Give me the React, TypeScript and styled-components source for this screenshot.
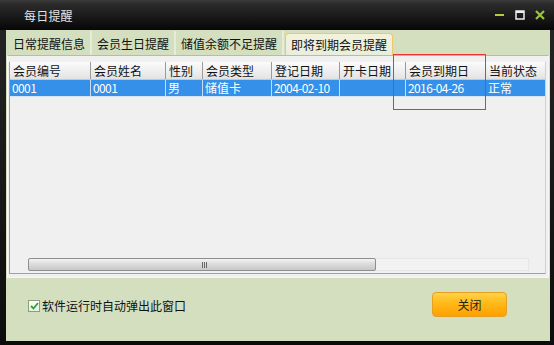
import React from "react"
import styled, { createGlobalStyle } from "styled-components"

const GlobalStyle = createGlobalStyle`
  html, body {
    margin: 0;
    padding: 0;
    background: #111;
  }
  body {
    font-family: "Noto Sans CJK SC", "Noto Sans", sans-serif;
    font-size: 12px;
  }
`

const Window = styled.div`
  width: 554px;
  height: 345px;
  display: flex;
  flex-direction: column;
  background: linear-gradient(#262626, #0c0c0c);
  box-sizing: border-box;
  overflow: hidden;
`

const TitleBar = styled.div`
  height: 30px;
  flex: none;
  display: flex;
  align-items: center;
  padding: 0 8px 0 24px;
  background: linear-gradient(#3c3c3c 0%, #2c2c2c 12%, #1a1a1a 55%, #060606 100%);
  color: #e4e4e4;
  font-size: 12px;
`

const Title = styled.div`
  flex: 1;
  letter-spacing: 0.2px;
`

const Controls = styled.div`
  display: flex;
  align-items: center;
  gap: 10px;
  margin-right: 1px;
`

const Body = styled.div`
  flex: 1;
  margin: 0 4px 4px 6px;
  background: #d3dfbf;
  display: flex;
  flex-direction: column;
`

const TabBar = styled.div`
  height: 25px;
  display: flex;
  align-items: flex-end;
  padding-left: 2px;
  flex: none;
`

const Tab = styled.div<{ $active?: boolean }>`
  height: ${(p) => (p.$active ? "22px" : "24px")};
  display: flex;
  align-items: center;
  padding: 0 5px;
  color: #111;
  font-size: 12px;
  box-sizing: border-box;
  ${(p) =>
    p.$active
      ? `
    background: linear-gradient(#f7f1d6, #eef1df 30%, #e9eedb);
    border: 1px solid #f0c66c;
    border-bottom: none;
    border-radius: 4px 4px 0 0;
    margin-left: 1px;
  `
      : `
    border-right: 2px solid #e6ecd8;
  `}
`

const Panel = styled.div`
  height: 223px;
  margin: 0 1px;
  border: 1px solid #f6f6f6;
  border-top-color: #b8b8b8;
  border-left-color: #fbfbfb;
  background: #f0f0f0;
  box-sizing: border-box;
  padding: 6px 2px 3px 1px;
  flex: none;
  display: flex;
  position: relative;
`

const Grid = styled.div`
  flex: 1;
  border: 1px solid #a0a0a0;
  border-top: none;
  border-right-color: #d0d0d0;
  display: flex;
  flex-direction: column;
  background: #f0f0f0;
`

const HeaderRow = styled.div`
  display: flex;
  height: 17px;
  background: linear-gradient(#fbfbfb, #ededed 60%, #e2e2e2);
  border-bottom: 1px solid #c8c8c8;
`

const HeadCell = styled.div<{ $w: number }>`
  width: ${(p) => p.$w}px;
  flex: none;
  box-sizing: border-box;
  padding-left: 3px;
  border-left: 1px solid #9a9a9a;
  line-height: 17px;
  color: #111;
  font-size: 12px;
  white-space: nowrap;
  overflow: hidden;
  &:first-child {
    border-left: none;
  }
`

const DataRow = styled.div<{ $selected?: boolean }>`
  display: flex;
  height: 16px;
  background: ${(p) => (p.$selected ? "#3590ea" : "transparent")};
  color: ${(p) => (p.$selected ? "#fff" : "#000")};
  border-bottom: 1px solid #d8e6f4;
`

const Cell = styled.div<{ $w: number; $mono?: boolean }>`
  width: ${(p) => p.$w}px;
  flex: none;
  box-sizing: border-box;
  padding-left: 2px;
  border-left: 1px solid #c6dcf4;
  line-height: 16px;
  font-size: 12px;
  white-space: nowrap;
  overflow: hidden;
  letter-spacing: ${(p) => (p.$mono ? "-0.6px" : "0")};
  &:first-child {
    border-left: none;
  }
`

const Spacer = styled.div`
  flex: 1;
`

const ScrollRow = styled.div`
  height: 14px;
  display: flex;
  padding-left: 18px;
  margin-bottom: 1px;
`

const Track = styled.div`
  width: 501px;
  height: 13px;
  display: flex;
  border: 1px solid #e6e6e6;
  background: #f2f2f2;
  box-sizing: border-box;
`

const Thumb = styled.div`
  width: 348px;
  height: 13px;
  margin: -1px 0 0 -1px;
  box-sizing: border-box;
  border: 1px solid #8e8e8e;
  border-radius: 2px;
  background: linear-gradient(#f4f4f4, #dcdcdc 45%, #c8c8cc);
  display: flex;
  align-items: center;
  justify-content: center;
`

const Grip = styled.div`
  width: 6px;
  height: 6px;
  margin-left: 6px;
  background: repeating-linear-gradient(90deg, #6a6a6a 0 1px, transparent 1px 2px);
`

const Highlight = styled.div`
  position: absolute;
  left: 385px;
  top: -2px;
  width: 93px;
  height: 56px;
  border: 1px solid #f03232;
  box-sizing: border-box;
  pointer-events: none;
`

const Footer = styled.div`
  flex: 1;
  display: flex;
  align-items: flex-start;
  padding: 14px 43px 0 22px;
`

const CheckLabel = styled.label`
  display: flex;
  align-items: center;
  gap: 2px;
  margin-top: 5px;
  color: #111;
  font-size: 12px;
  flex: 1;
`

const Box = styled.span`
  width: 12px;
  height: 12px;
  box-sizing: border-box;
  border: 1px solid #8aa07a;
  background: linear-gradient(#ffffff, #e6f0dc);
  display: flex;
  align-items: center;
  justify-content: center;
`

const CloseButton = styled.button`
  width: 75px;
  height: 25px;
  border: 1px solid #e8a020;
  border-radius: 4px;
  background: linear-gradient(#ffd24a 0%, #ffbb1c 40%, #ffa000 100%);
  color: #222;
  font-family: "Noto Sans CJK SC", sans-serif;
  font-size: 12px;
  padding: 0;
  cursor: pointer;
`

const columns = [
  { title: "会员编号", w: 80 },
  { title: "会员姓名", w: 75 },
  { title: "性别", w: 37 },
  { title: "会员类型", w: 69 },
  { title: "登记日期", w: 68 },
  { title: "开卡日期", w: 66 },
  { title: "会员到期日", w: 80 },
  { title: "当前状态", w: 60 },
]

const row = ["0001", "0001", "男", "储值卡", "2004-02-10", "", "2016-04-26", "正常"]
const monoCols = [0, 1, 4, 6]

export default function App() {
  return (
    <Window>
      <GlobalStyle />
      <TitleBar>
        <Title>每日提醒</Title>
        <Controls>
          <svg width="10" height="10" viewBox="0 0 10 10">
            <rect x="0" y="4" width="9" height="2" fill="#b4cc3c" />
          </svg>
          <svg width="10" height="10" viewBox="0 0 10 10">
            <rect x="1" y="1" width="8" height="8" fill="none" stroke="#f0f0f0" strokeWidth="1.5" />
            <rect x="1" y="1" width="8" height="2" fill="#f0f0f0" />
          </svg>
          <svg width="10" height="10" viewBox="0 0 10 10">
            <path d="M1 1 L9 9 M9 1 L1 9" stroke="#9cc43c" strokeWidth="2.2" />
          </svg>
        </Controls>
      </TitleBar>
      <Body>
        <TabBar>
          <Tab>日常提醒信息</Tab>
          <Tab>会员生日提醒</Tab>
          <Tab>储值余额不足提醒</Tab>
          <Tab $active>即将到期会员提醒</Tab>
        </TabBar>
        <Panel>
          <Grid>
            <HeaderRow>
              {columns.map((c) => (
                <HeadCell key={c.title} $w={c.w}>
                  {c.title}
                </HeadCell>
              ))}
            </HeaderRow>
            <DataRow $selected>
              {row.map((v, i) => (
                <Cell key={i} $w={columns[i].w} $mono={monoCols.includes(i)}>
                  {v}
                </Cell>
              ))}
            </DataRow>
            <Spacer />
            <ScrollRow>
              <Track>
                <Thumb>
                  <Grip />
                </Thumb>
              </Track>
            </ScrollRow>
          </Grid>
          <Highlight />
        </Panel>
        <Footer>
          <CheckLabel>
            <Box>
              <svg width="9" height="8" viewBox="0 0 9 8">
                <path d="M1 4 L3.5 6.5 L8 1" fill="none" stroke="#3a9a3a" strokeWidth="1.8" />
              </svg>
            </Box>
            软件运行时自动弹出此窗口
          </CheckLabel>
          <CloseButton>关闭</CloseButton>
        </Footer>
      </Body>
    </Window>
  )
}
